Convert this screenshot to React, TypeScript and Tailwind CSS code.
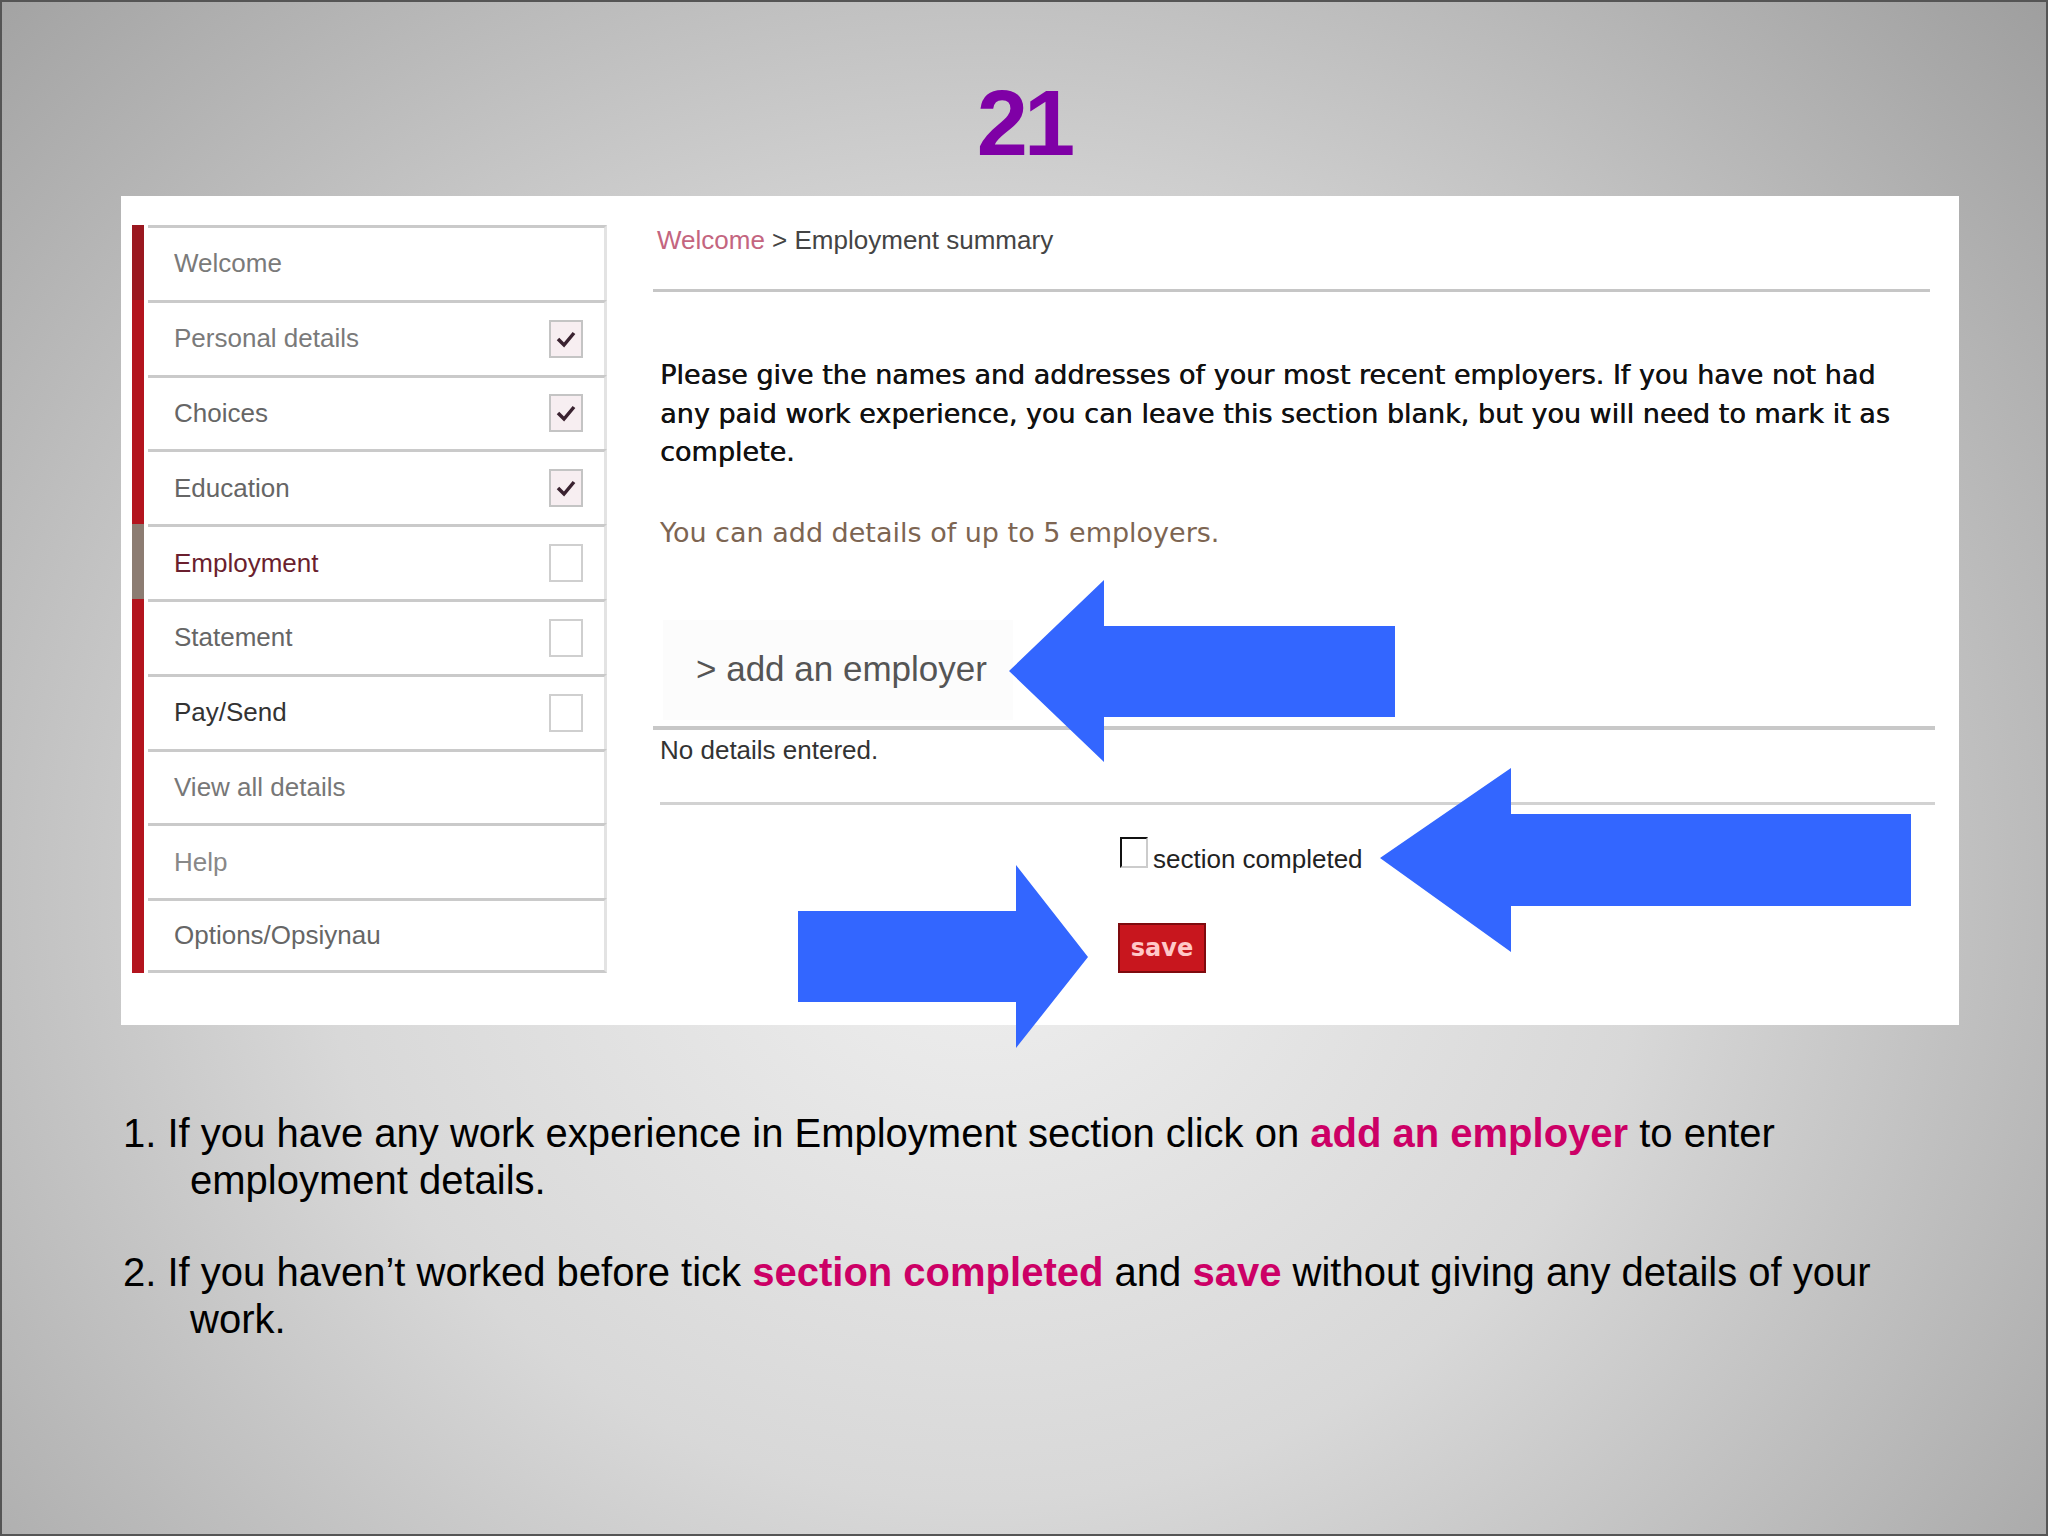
import React from 'react';

type Box = 'checked' | 'empty' | null;

const navItems: { label: string; box: Box; color: string; active?: boolean }[] = [
  { label: 'Welcome', box: null, color: 'text-[#7a7a7a]' },
  { label: 'Personal details', box: 'checked', color: 'text-[#7a7a7a]' },
  { label: 'Choices', box: 'checked', color: 'text-[#666666]' },
  { label: 'Education', box: 'checked', color: 'text-[#666666]' },
  { label: 'Employment', box: 'empty', color: 'text-[#6b1f2e]', active: true },
  { label: 'Statement', box: 'empty', color: 'text-[#666666]' },
  { label: 'Pay/Send', box: 'empty', color: 'text-[#333333]' },
  { label: 'View all details', box: null, color: 'text-[#777777]' },
  { label: 'Help', box: null, color: 'text-[#888888]' },
  { label: 'Options/Opsiynau', box: null, color: 'text-[#666666]' },
];

const CheckBox = ({ kind }: { kind: Box }) => {
  if (!kind) return null;
  if (kind === 'checked') {
    return (
      <div className="w-[34px] h-[38px] border-2 border-[#c4c4c4] bg-[#f7eef1] flex items-center justify-center">
        <svg width="22" height="20" viewBox="0 0 22 20">
          <path d="M3 10 L9 16 L19 4" fill="none" stroke="#3a2230" strokeWidth="3.5" />
        </svg>
      </div>
    );
  }
  return <div className="w-[34px] h-[38px] border-2 border-[#cfcfcf] bg-white" />;
};

const Sidebar = () => (
  <div className="flex flex-col">
    {navItems.map((item, i) => (
      <div key={item.label} className="flex h-[74.8px]">
        <div className={item.active ? 'w-[12px] bg-[#8c7c72]' : i === 0 ? 'w-[12px] bg-[#9a1820]' : 'w-[12px] bg-[#b3141e]'} />
        <div
          className={
            i === navItems.length - 1
              ? 'ml-[4px] w-[459px] border-t-[3px] border-b-[3px] border-[#cacaca] border-r-[3px] border-r-[#e3e3e3] flex items-center justify-between pl-[26px] pr-[21px]'
              : 'ml-[4px] w-[459px] border-t-[3px] border-[#cacaca] border-r-[3px] border-r-[#e3e3e3] flex items-center justify-between pl-[26px] pr-[21px]'
          }
        >
          <span className={`text-[26px] ${item.color}`}>{item.label}</span>
          <CheckBox kind={item.box} />
        </div>
      </div>
    ))}
  </div>
);

const Content = () => (
  <div className="ml-[46px] w-[1282px] flex flex-col">
    {/* breadcrumb */}
    <div className="ml-[4px] h-[30px] leading-[30px] text-[26px] whitespace-nowrap">
      <span className="text-[#c4657f]">Welcome</span>
      <span className="text-[#444444]"> &gt; Employment summary</span>
    </div>
    <div className="mt-[34px] h-[3px] w-[1277px] bg-[#c6c6c6]" />

    <p className="mt-[64px] ml-[7px] font-['DejaVu_Sans',Verdana,sans-serif] text-[27px] leading-[38.5px] text-[#111111] whitespace-nowrap [text-shadow:0.5px_0_0_#111111]">
      Please give the names and addresses of your most recent employers. If you have not had
      <br />
      any paid work experience, you can leave this section blank, but you will need to mark it as
      <br />
      complete.
    </p>
    <p className="mt-[42px] ml-[7px] font-['DejaVu_Sans',Verdana,sans-serif] text-[27px] leading-[38px] text-[#7d6552] whitespace-nowrap">
      You can add details of up to 5 employers.
    </p>

    {/* add employer */}
    <div className="mt-[68px] ml-[10px] h-[100px] w-[350px] bg-[#fcfcfc] flex items-center pl-[33px] text-[35px] text-[#555555] whitespace-nowrap">
      &gt; add an employer
    </div>
    <div className="mt-[6px] h-[4px] w-[1282px] bg-[#c8c8c8]" />
    <div className="mt-[5px] ml-[7px] leading-[30px] text-[26px] text-[#333333]">No details entered.</div>
    <div className="mt-[37px] ml-[7px] h-[3px] w-[1275px] bg-[#d2d2d2]" />

    {/* section completed */}
    <div className="mt-[32px] ml-[467px] h-[31px] flex items-end gap-[5px]">
      <div className="w-[28px] h-[31px] bg-white border-2 border-t-[#111111] border-l-[#111111] border-b-[#cccccc] border-r-[#cccccc]" />
      <span className="text-[26px] leading-[26px] translate-y-[4px] text-[#222222] whitespace-nowrap">section completed</span>
    </div>
    <div className="mt-[55px] ml-[465px] w-[88px] h-[50px] bg-[#c8161e] border-2 border-[#7f0a0e] flex items-center justify-center font-['DejaVu_Sans',Verdana,sans-serif] font-bold text-[24px] text-[#ffc8c8]">
      save
    </div>
  </div>
);

const Arrows = () => (
  <svg className="absolute left-0 top-0 pointer-events-none" width="2048" height="1536" viewBox="0 0 2048 1536">
    <polygon fill="#3366ff" points="1009,671 1104,580 1104,626 1395,626 1395,717 1104,717 1104,762" />
    <polygon fill="#3366ff" points="1380,858 1511,768 1511,814 1911,814 1911,906 1511,906 1511,952" />
    <polygon fill="#3366ff" points="798,911 1016,911 1016,865 1088,957 1016,1048 1016,1002 798,1002" />
  </svg>
);

const App = () => {
  return (
    <div className="relative w-[2048px] h-[1536px] overflow-hidden font-['Liberation_Sans',Arial,sans-serif] bg-[radial-gradient(ellipse_72%_88%_at_48%_58%,#f0f0f0_0%,#d8d8d8_45%,#9c9c9c_100%)] shadow-[inset_0_0_0_2px_#555555]">
      {/* Title */}
      <div className="pt-[77px] text-center text-[92px] leading-none font-bold text-[#7f00a6] tracking-[-4px]">21</div>

      {/* Screenshot panel */}
      <div className="mt-[27px] ml-[121px] w-[1838px] h-[829px] bg-white flex pt-[29px] pl-[11px]">
        <Sidebar />
        <Content />
      </div>

      {/* Instructions */}
      <div className="mt-[85px] ml-[123px] text-[40px] leading-[47px] text-black whitespace-nowrap">
        <p className="pl-[67px] indent-[-67px]">
          1. If you have any work experience in Employment section click on{' '}
          <span className="font-bold text-[#cc0066]">add an employer</span> to enter
          <br />
          employment details.
        </p>
        <p className="mt-[45px] pl-[67px] indent-[-67px]">
          2. If you haven’t worked before tick <span className="font-bold text-[#cc0066]">section completed</span> and{' '}
          <span className="font-bold text-[#cc0066]">save</span> without giving any details of your
          <br />
          work.
        </p>
      </div>

      <Arrows />
    </div>
  );
};

export default App;
